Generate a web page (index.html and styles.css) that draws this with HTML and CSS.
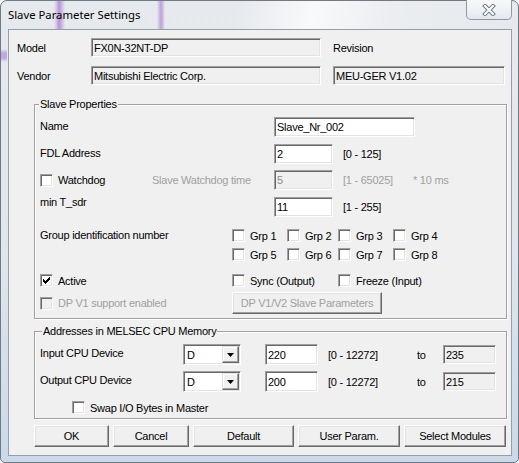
FILE: index.html
```html
<!DOCTYPE html>
<html>
<head>
<meta charset="utf-8">
<link rel="stylesheet" href="styles.css">
</head>
<body>
<div class="window">
  <div class="titlebar">
    <span class="title">Slave Parameter Settings</span>
    <div class="close">
      <svg width="14" height="12" viewBox="0 0 14 12"><path d="M3 2 L11 10 M11 2 L3 10" stroke="#6f7b87" stroke-width="4" stroke-linecap="square" fill="none"/><path d="M3 2 L11 10 M11 2 L3 10" stroke="#ffffff" stroke-width="2" stroke-linecap="square" fill="none"/></svg>
    </div>
  </div>
  <div class="client">
    <div class="info">
      <div class="info-row">
        <span class="info-lbl">Model</span>
        <div class="field ro w230">FX0N-32NT-DP</div>
        <span class="rev-lbl">Revision</span>
      </div>
      <div class="info-row">
        <span class="info-lbl">Vendor</span>
        <div class="field ro w230">Mitsubishi Electric Corp.</div>
        <div class="field ro w172 rev">MEU-GER V1.02</div>
      </div>
    </div>

    <div class="group slave">
      <span class="group-title">Slave Properties</span>
      <div class="prow first">
        <span class="plbl">Name</span>
        <div class="field w141">Slave_Nr_002</div>
      </div>
      <div class="prow">
        <span class="plbl">FDL Address</span>
        <div class="field w59">2</div>
        <span class="range">[0 - 125]</span>
      </div>
      <div class="prow tight">
        <label class="chk wd"><span class="box"></span><span>Watchdog</span></label>
        <span class="wdtime dis">Slave Watchdog time</span>
        <div class="field w59 disfield">5</div>
        <span class="range dis r70">[1 - 65025]</span>
        <span class="dis">* 10 ms</span>
      </div>
      <div class="prow">
        <span class="plbl up">min T_sdr</span>
        <div class="field w59">11</div>
        <span class="range">[1 - 255]</span>
      </div>
      <div class="grprow">
        <span class="grplbl">Group identification number</span>
        <div class="grpgrid">
          <label class="chk"><span class="box"></span><span>Grp 1</span></label>
          <label class="chk"><span class="box"></span><span>Grp 2</span></label>
          <label class="chk"><span class="box"></span><span>Grp 3</span></label>
          <label class="chk"><span class="box"></span><span>Grp 4</span></label>
          <label class="chk"><span class="box"></span><span>Grp 5</span></label>
          <label class="chk"><span class="box"></span><span>Grp 6</span></label>
          <label class="chk"><span class="box"></span><span>Grp 7</span></label>
          <label class="chk"><span class="box"></span><span>Grp 8</span></label>
        </div>
      </div>
      <div class="actrow">
        <label class="chk c192"><span class="box"><svg width="11" height="11" viewBox="0 0 11 11" shape-rendering="crispEdges"><rect x="2" y="4" width="1" height="3"/><rect x="3" y="5" width="1" height="3"/><rect x="4" y="6" width="1" height="3"/><rect x="5" y="5" width="1" height="3"/><rect x="6" y="4" width="1" height="3"/><rect x="7" y="3" width="1" height="3"/><rect x="8" y="2" width="1" height="3"/></svg></span><span>Active</span></label>
        <label class="chk c106"><span class="box"></span><span>Sync (Output)</span></label>
        <label class="chk"><span class="box"></span><span>Freeze (Input)</span></label>
      </div>
      <div class="dprow">
        <label class="chk c192 dis"><span class="box disbox"></span><span>DP V1 support enabled</span></label>
        <div class="btn dpbtn dis">DP V1/V2 Slave Parameters</div>
      </div>
    </div>

    <div class="group addr">
      <span class="group-title">Addresses in MELSEC CPU Memory</span>
      <div class="arow first">
        <span class="albl">Input CPU Device</span>
        <div class="combo"><span>D</span><span class="dd"><svg width="7" height="4" viewBox="0 0 7 4"><path d="M0 0 H7 L3.5 4 Z"/></svg></span></div>
        <div class="field w53 ain">220</div>
        <span class="arange">[0 - 12272]</span>
        <span class="to">to</span>
        <div class="field ro w53 tobox">235</div>
      </div>
      <div class="arow">
        <span class="albl">Output CPU Device</span>
        <div class="combo"><span>D</span><span class="dd"><svg width="7" height="4" viewBox="0 0 7 4"><path d="M0 0 H7 L3.5 4 Z"/></svg></span></div>
        <div class="field w53 ain">200</div>
        <span class="arange">[0 - 12272]</span>
        <span class="to">to</span>
        <div class="field ro w53 tobox">215</div>
      </div>
      <div class="swaprow">
        <label class="chk"><span class="box"></span><span>Swap I/O Bytes in Master</span></label>
      </div>
    </div>

    <div class="buttons">
      <div class="btn b-ok">OK</div>
      <div class="btn b-cancel">Cancel</div>
      <div class="btn b-def">Default</div>
      <div class="btn b-user">User Param.</div>
      <div class="btn b-sel">Select Modules</div>
    </div>
  </div>
</div>
</body>
</html>
```

FILE: styles.css
```css
* { box-sizing: border-box; }

body {
  margin: 0;
  background: #f4f4f4;
  font-family: "Liberation Sans", Arial, sans-serif;
  font-size: 11px;
  letter-spacing: -0.25px;
  color: #000;
}

.window {
  width: 519px;
  height: 463px;
  border: 1px solid #6e7a86;
  border-radius: 7px 7px 5px 5px;
  padding: 0 6px 6px 7px;
  display: flex;
  flex-direction: column;
  background:
    linear-gradient(90deg, transparent 53px, rgba(160, 100, 205, 0.35) 56px, rgba(150, 90, 200, 0.6) 58px, rgba(160, 100, 205, 0.35) 61px, transparent 64px) 0 0 / 100% 28px no-repeat,
    linear-gradient(90deg, transparent 156px, rgba(160, 100, 205, 0.3) 158px, rgba(150, 90, 200, 0.5) 160px, rgba(160, 100, 205, 0.3) 162px, transparent 164px) 0 0 / 100% 28px no-repeat,
    linear-gradient(180deg, transparent 48px, rgba(150, 90, 200, 0.45) 52px, rgba(150, 90, 200, 0.45) 57px, transparent 61px) 0 0 / 6px 100% no-repeat,
    linear-gradient(100deg, rgba(255,255,255,0) 0%, rgba(255,255,255,0) 45%, rgba(255,255,255,0.75) 60%, rgba(255,255,255,0.2) 75%, rgba(255,255,255,0) 100%) 0 0 / 100% 40px no-repeat,
    linear-gradient(180deg, #e6e9ed 0%, #e2e7ec 50%, #cbd9e8 100%);
}

.titlebar {
  height: 28px;
  display: flex;
  align-items: flex-start;
  flex-shrink: 0;
}

.title {
  font-family: "Noto Sans", "Open Sans", sans-serif;
  font-size: 11.3px;
  letter-spacing: 0;
  line-height: 16px;
  margin-top: 6px;
  color: #000;
}

.close {
  margin-left: auto;
  margin-top: -1px;
  width: 46px;
  height: 20px;
  border: 1px solid #8d99a5;
  border-top: none;
  border-radius: 0 0 5px 5px;
  background: linear-gradient(180deg, #f6f8fa 0%, #eef1f4 60%, #e2e7ec 100%);
  display: flex;
  align-items: center;
  justify-content: center;
}

.client {
  width: 504px;
  height: 427px;
  background: #f0f0f0;
  border: 1px solid #939faa;
  display: flex;
  flex-direction: column;
  flex-shrink: 0;
}

/* sunken edit fields */
.field {
  height: 19px;
  background: #fff;
  border: 1px solid;
  border-color: #a0a0a0 #fff #fff #a0a0a0;
  box-shadow: inset 1px 1px #696969, inset -1px -1px #e3e3e3;
  padding: 0 0 0 2px;
  display: flex;
  align-items: center;
  white-space: nowrap;
  flex-shrink: 0;
}
.field.ro { background: #f0f0f0; }
.w230 { width: 230px; }
.w172 { width: 172px; }
.w141 { width: 141px; height: 20px; }
.w59 { width: 59px; height: 20px; }
.w53 { width: 53px; }

/* info */
.info {
  padding: 8px 0 0 8px;
  display: flex;
  flex-direction: column;
  gap: 9px;
}
.info-row {
  display: flex;
  align-items: center;
  height: 19px;
}
.info-lbl { width: 74px; }
.rev-lbl { margin-left: 12px; }
.rev { margin-left: 12px; }

/* group boxes */
.group {
  margin-left: 25px;
  width: 473px;
  border: 1px solid #a0a0a0;
  box-shadow: inset 1px 1px #fff, 1px 1px #fff;
  display: flex;
  flex-direction: column;
  flex-shrink: 0;
}
.group-title {
  align-self: flex-start;
  background: #f0f0f0;
  line-height: 13px;
  height: 13px;
  padding: 0 1px;
  margin: -7px 0 0 4px;
}
.slave {
  margin-top: 19px;
  height: 215px;
}
.addr {
  margin-top: 12px;
  height: 88px;
}
.addr .group-title { margin-left: 7px; }

.prow {
  display: flex;
  align-items: center;
  height: 20px;
  padding-left: 5px;
  margin-top: 7px;
}
.prow.first { margin-top: 6px; }
.prow.tight { margin-top: 6px; }
.plbl { width: 234px; margin-bottom: 2px; }
.plbl.up {
  align-self: flex-start;
  line-height: 13px;
  margin: -1px 0 0 0;
}
.range { margin-left: 10px; }
.r70 { width: 70px; }
.wdtime { width: 122px; }
.wd { width: 112px; }
.dis { color: #a0a0a0; }
.field.disfield { background: #f0f0f0; color: #8c8c8c; }

/* checkboxes */
.chk {
  display: flex;
  align-items: center;
  height: 17px;
  gap: 5px;
  white-space: nowrap;
}
.box {
  width: 13px;
  height: 13px;
  flex-shrink: 0;
  background: #fff;
  border: 1px solid;
  border-color: #a0a0a0 #fff #fff #a0a0a0;
  box-shadow: inset 1px 1px #696969, inset -1px -1px #e3e3e3;
}
.box svg { display: block; }
.box.disbox { background: #f0f0f0; }

.grprow {
  display: flex;
  align-items: flex-start;
  padding-left: 5px;
  margin-top: 10px;
}
.grplbl {
  width: 192px;
  line-height: 17px;
}
.grpgrid {
  display: grid;
  grid-template-columns: 55px 51px 55px auto;
  row-gap: 2px;
}

.actrow {
  display: flex;
  align-items: center;
  padding-left: 5px;
  margin-top: 9px;
}
.c192 { width: 192px; }
.c106 { width: 106px; }

.dprow {
  display: flex;
  align-items: center;
  height: 22px;
  padding-left: 5px;
  margin-top: 3px;
}

/* buttons */
.btn {
  background: #f0f0f0;
  border: 1px solid;
  border-color: #fff #696969 #696969 #fff;
  box-shadow: inset -1px -1px #a0a0a0, inset 1px 1px #e3e3e3;
  display: flex;
  align-items: center;
  justify-content: center;
  white-space: nowrap;
  flex-shrink: 0;
}
.dpbtn { width: 150px; height: 22px; }

/* addresses */
.arow {
  display: flex;
  align-items: center;
  height: 21px;
  padding-left: 5px;
  margin-top: 6px;
}
.arow.first { margin-top: 6px; }
.albl { width: 143px; margin-bottom: 3px; }
.combo {
  width: 58px;
  height: 21px;
  background: #fff;
  border: 1px solid;
  border-color: #a0a0a0 #fff #fff #a0a0a0;
  box-shadow: inset 1px 1px #696969, inset -1px -1px #e3e3e3;
  display: flex;
  align-items: center;
  justify-content: space-between;
  padding: 1px 1px 1px 3px;
  flex-shrink: 0;
}
.dd {
  width: 17px;
  height: 17px;
  background: #f0f0f0;
  border: 1px solid;
  border-color: #e3e3e3 #696969 #696969 #e3e3e3;
  box-shadow: inset -1px -1px #a0a0a0, inset 1px 1px #fff;
  display: flex;
  align-items: center;
  justify-content: center;
}
.dd svg { display: block; }
.ain { margin-left: 24px; height: 21px; }
.arange { margin-left: 10px; width: 89px; }
.to { width: 26px; }
.tobox { height: 19px; }

.swaprow {
  display: flex;
  padding-left: 37px;
  margin-top: 7px;
}

.buttons {
  display: flex;
  gap: 4px;
  margin: 6px 0 0 25px;
}
.buttons .btn { height: 22px; }
.b-ok { width: 75px; }
.b-cancel { width: 76px; }
.b-def { width: 101px; }
.b-user { width: 102px; }
.b-sel { width: 102px; }
```
